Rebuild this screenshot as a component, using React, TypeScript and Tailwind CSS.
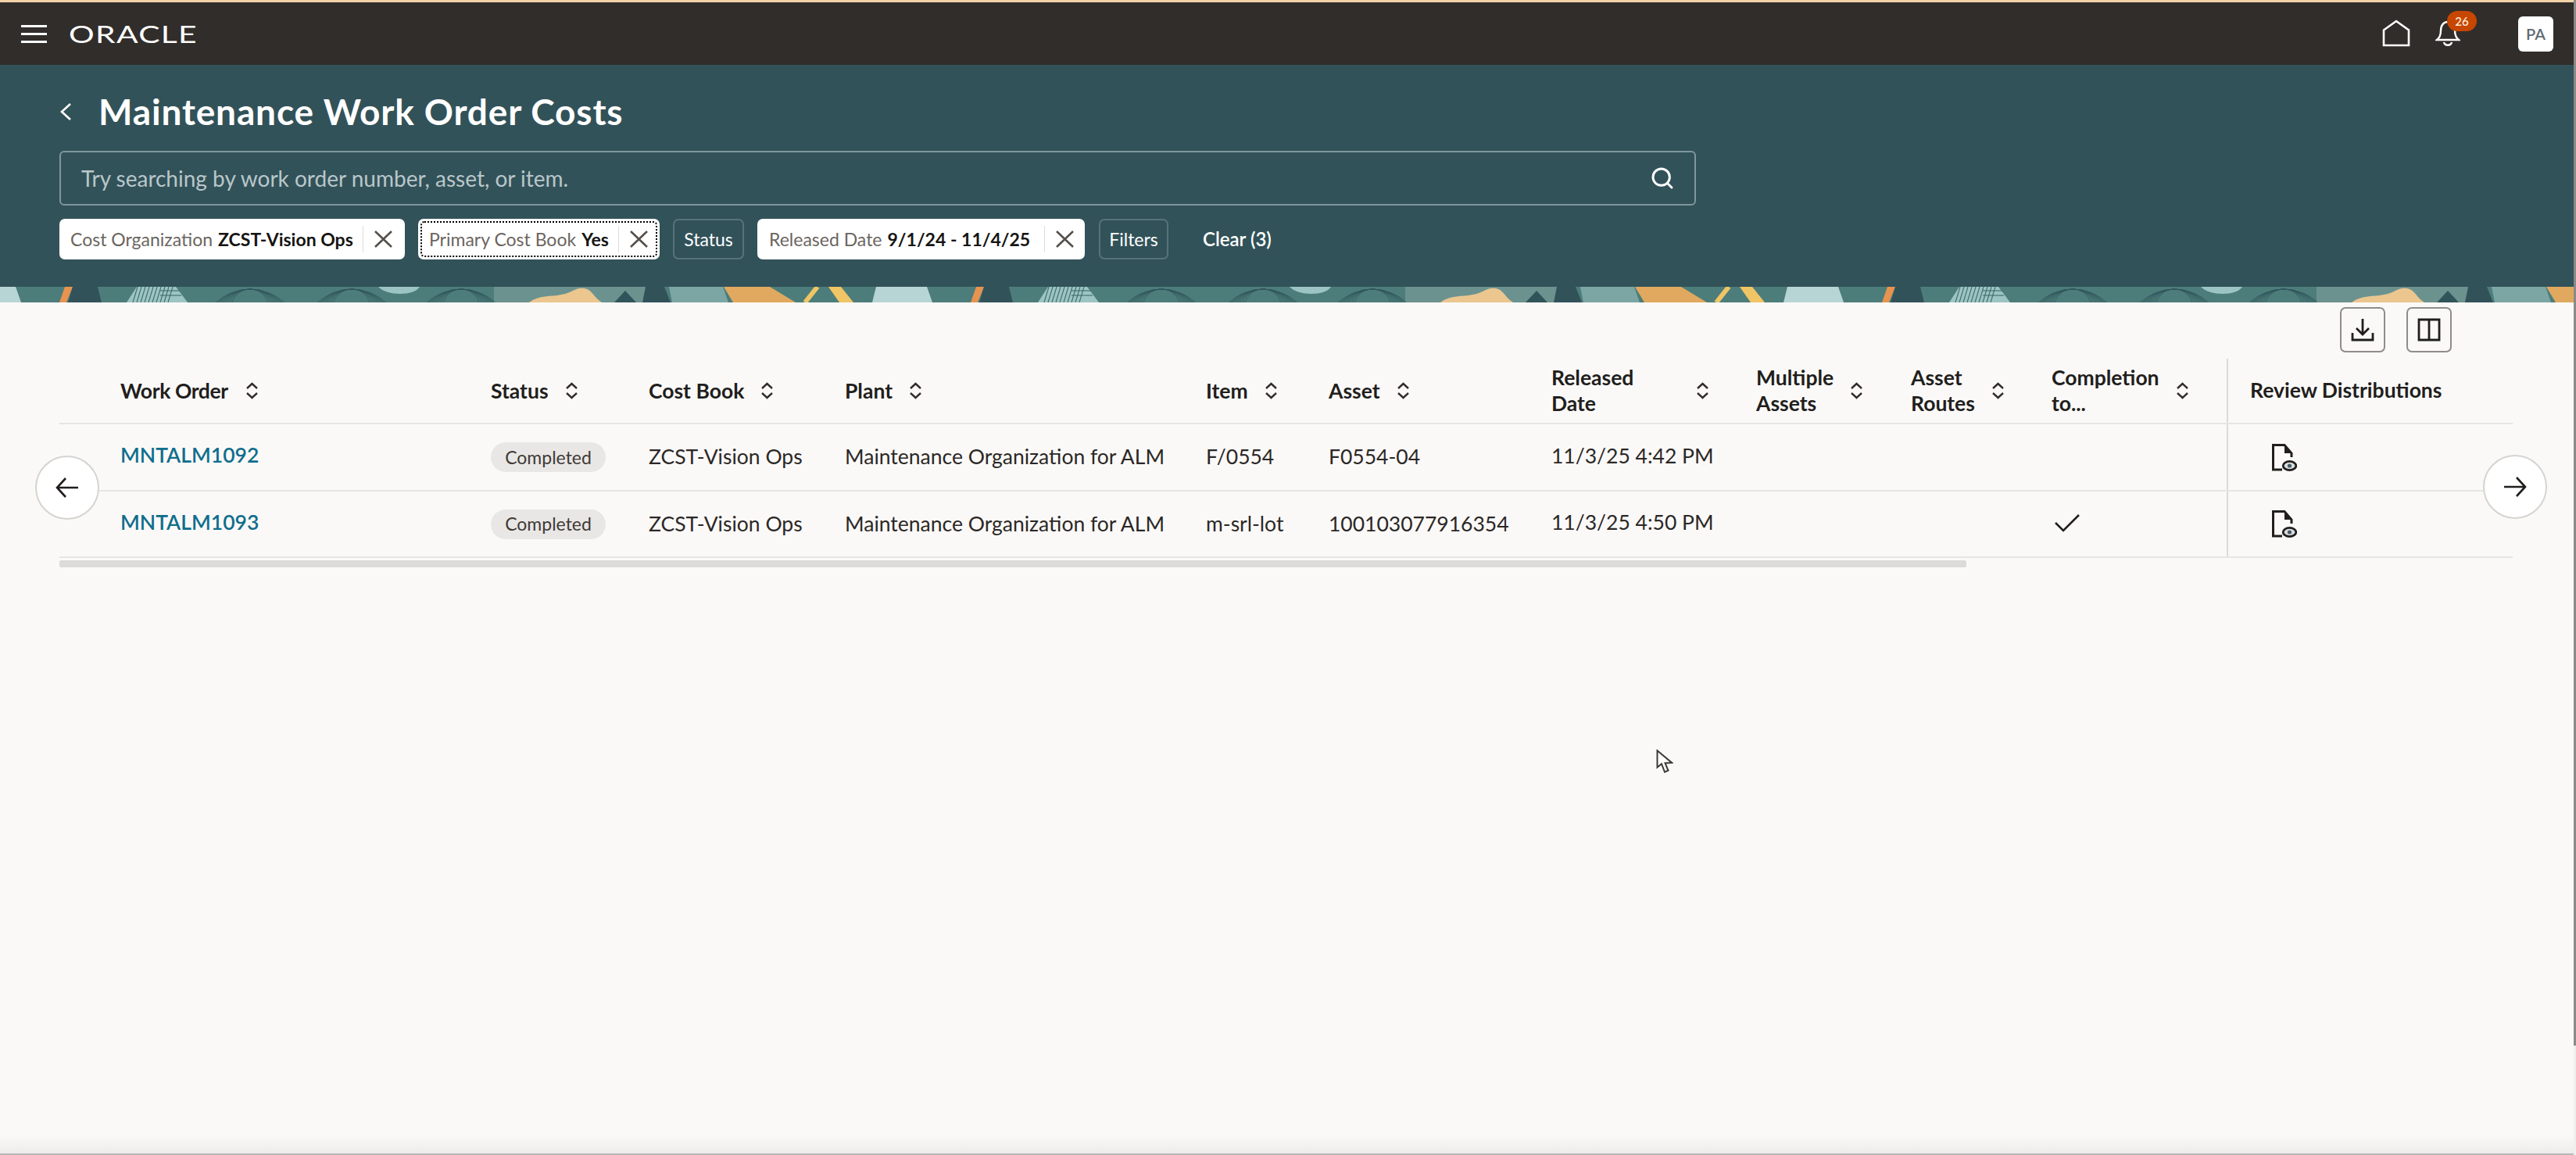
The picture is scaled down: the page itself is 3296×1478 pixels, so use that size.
import { Search } from "lucide-react"
import type { ReactNode } from "react"

const rowGrid =
  "grid grid-cols-[50px_474px_202px_251px_462px_157px_285px_262px_198px_180px_252px_366px]"

function BannerPattern() {
  const light = "#9cc4c4"
  const arcs = [320, 450, 590]
  return (
    <svg className="block h-[20px] w-full" aria-hidden="true">
      <defs>
        <pattern id="banner" patternUnits="userSpaceOnUse" width="1166" height="20">
          <rect width="1166" height="20" fill="#4d7d7b" />
          <rect x="632" width="198" height="20" fill="#6b928f" />
          <polygon points="-45,0 20,0 27,20 -50,20" fill="#b8d5d6" />
          <polygon points="1121,0 1186,0 1193,20 1116,20" fill="#b8d5d6" />
          <polygon points="83,0 93,0 85,20 76,20" fill="#e8934f" />
          <polygon points="93,0 125,0 130,20 87,20" fill="#325259" />
          <polygon points="175,0 225,0 240,20 162,20" fill={light} />
          <g stroke="#3f6a6a" strokeWidth="1.1">
            {[176, 181, 186, 191, 196, 201, 206, 211, 216, 221].map((x) => (
              <line key={x} x1={x} y1="0" x2={x - 6} y2="20" />
            ))}
            <line x1="205" y1="5" x2="230" y2="5" />
            <line x1="205" y1="11" x2="232" y2="11" />
          </g>
          <path d="M484 0 H537 C530 12 495 12 484 0 Z" fill={light} />
          <g fill="none" stroke="#2f555a" strokeOpacity="0.75" strokeWidth="1">
            {arcs.map((cx) =>
              [24, 29, 34, 39, 44, 49, 54, 59, 64].map((r) => (
                <circle key={`${cx}-${r}`} cx={cx} cy={r + 3} r={r} />
              ))
            )}
          </g>
          <path d="M677 20 C690 10 705 13 718 10 C732 8 736 0 748 2 C758 4 760 14 770 20 Z" fill="#ebc68f" />
          <polygon points="786,20 800,5 814,20" fill="#2f555a" />
          <polygon points="826,0 850,0 858,20 822,20" fill="#325259" />
          <polygon points="856,0 925,0 932,20 860,20" fill="#7ba6a4" />
          <polygon points="926,0 985,0 1018,20 938,20" fill="#e0a95f" />
          <line x1="1046" y1="0" x2="1030" y2="20" stroke="#f0c565" strokeWidth="6" />
          <polygon points="1060,0 1076,0 1092,20 1074,20" fill="#f0c565" />
        </pattern>
      </defs>
      <rect width="100%" height="20" fill="url(#banner)" />
    </svg>
  )
}

function CloseIcon() {
  return (
    <svg width="23" height="22" viewBox="0 0 23 22" fill="none" stroke="#55504c" strokeWidth="2.6" aria-hidden="true">
      <path d="M1 1 L22 21 M22 1 L1 21" />
    </svg>
  )
}

function SortIcon() {
  return (
    <svg className="shrink-0" width="17" height="22" viewBox="0 0 17 22" fill="none" stroke="#312d2a" strokeWidth="2.4" aria-hidden="true">
      <path d="M2 8 L8.5 2 L15 8 M2 14 L8.5 20 L15 14" />
    </svg>
  )
}

function DocIcon() {
  return (
    <svg width="32" height="35" viewBox="0 0 32 35" fill="none" aria-hidden="true">
      <path d="M13 33 H1.5 V1.5 H16 L25 12 V17" stroke="#211e1c" strokeWidth="3" />
      <path d="M16 2 L25 12 H16 Z" fill="#211e1c" />
      <ellipse cx="22.5" cy="28" rx="8.3" ry="5.6" stroke="#211e1c" strokeWidth="2.8" fill="#d8dde0" />
      <circle cx="22.5" cy="28" r="2.6" fill="#4b5c68" />
    </svg>
  )
}

function FilterChip({ label, value, focused, width, pad }: { label: string; value: string; focused?: boolean; width: string; pad: string }) {
  return (
    <div className={`relative flex h-[52px] items-center rounded-[7px] bg-white ${width} ${pad}`}>
      {focused && <div className="pointer-events-none absolute inset-[3px] rounded-[5px] border-2 border-dotted border-black" />}
      <span className="whitespace-nowrap text-[23px] text-[#6b6560]">{label}</span>
      <span className="ml-[7px] whitespace-nowrap text-[23px] font-bold text-[#161513]">{value}</span>
      <span className="ml-auto h-[34px] w-px bg-[#dedcda]" />
      <span className="ml-[14px]">
        <CloseIcon />
      </span>
    </div>
  )
}

function FilterButton({ children, width }: { children: ReactNode; width: string }) {
  return (
    <div className={`flex h-[52px] items-center justify-center rounded-[7px] border-2 border-[#567379] text-[23px] text-white ${width}`}>
      {children}
    </div>
  )
}

function HeaderLabel({ children, labelClass }: { children: ReactNode; labelClass?: string }) {
  return (
    <div className="flex items-center gap-[21px] pl-[28px] text-[26.5px] font-bold leading-[33px] text-[#211e1c]">
      <span className={`whitespace-nowrap ${labelClass ?? ""}`}>{children}</span>
      <SortIcon />
    </div>
  )
}

function Row({ order, item, asset, released, done, height }: { order: string; item: string; asset: string; released: string; done?: boolean; height: string }) {
  return (
    <div className={`${rowGrid} ${height} items-center border-b-2 border-[#e7e5e3] text-[26.5px] text-[#2b2826]`}>
      <div />
      <a className="-mt-[4px] whitespace-nowrap pl-[28px] font-semibold text-[#0f6e8c]">{order}</a>
      <div className="pl-[28px]">
        <span className="flex h-[38px] w-[147px] items-center justify-center rounded-full bg-[#e9e7e5] text-[23px] text-[#3f3a36]">
          Completed
        </span>
      </div>
      <div className="whitespace-nowrap pl-[28px]">ZCST-Vision Ops</div>
      <div className="whitespace-nowrap pl-[28px]">Maintenance Organization for ALM</div>
      <div className="whitespace-nowrap pl-[28px]">{item}</div>
      <div className="whitespace-nowrap pl-[28px]">{asset}</div>
      <div className="-mt-[3px] whitespace-nowrap pl-[28px]">{released}</div>
      <div />
      <div />
      <div className="pl-[31px]">
        {done && (
          <svg className="-mt-[4px]" width="34" height="24" viewBox="0 0 34 24" fill="none" stroke="#211e1c" strokeWidth="2.6" aria-hidden="true">
            <path d="M2 12 L12 22 L32 2" />
          </svg>
        )}
      </div>
      <div className="flex h-full items-center border-l-2 border-[#dcdad8] pl-[56px]">
        <DocIcon />
      </div>
    </div>
  )
}

export default function App() {
  return (
    <div className="relative h-[1478px] w-full overflow-hidden bg-[#fbf9f8] font-['Lato',sans-serif]">
      <header className="flex h-[83px] items-center border-t-[3px] border-[#f4d2a8] bg-[#312d2a] pl-[27px] pr-[29px]">
        <div className="flex w-[33px] flex-col gap-[7px]">
          <span className="h-[3px] bg-white" />
          <span className="h-[3px] bg-white" />
          <span className="h-[3px] bg-white" />
        </div>
        <span className="ml-[28px] origin-left scale-x-[1.36] text-[30px] leading-none tracking-[1px] text-white">ORACLE</span>
        <div className="ml-auto flex items-center">
          <svg width="36" height="36" viewBox="0 0 36 36" fill="none" stroke="#fff" strokeWidth="2.6" aria-hidden="true">
            <path d="M2 13.5 L18 2 L34 13.5 V33 H2 Z" />
          </svg>
          <div className="relative ml-[32px] mr-[74px]">
            <svg className="block" width="32" height="34" viewBox="0 0 32 34" fill="none" stroke="#fff" strokeWidth="2.4" aria-hidden="true">
              <path d="M2 25 C6 22 7 18 7 13 C7 6 11 2 16 2 C21 2 25 6 25 13 C25 18 26 22 30 25 Z" />
              <path d="M11 28 C12 33 20 33 21 28" />
            </svg>
            <span className="absolute -top-[12px] left-[15px] flex h-[26px] w-[38px] items-center justify-center rounded-full bg-[#c74600] text-[15px] font-semibold text-[#ffe9d6]">
              26
            </span>
          </div>
          <div className="flex h-[45px] w-[45px] items-center justify-center rounded-[6px] bg-white text-[20px] font-semibold text-[#5f6b75]">
            PA
          </div>
        </div>
      </header>

      <section className="h-[284px] bg-[#325259] pl-[76px] pt-[36px]">
        <div className="flex h-[48px] items-center">
          <svg width="16" height="24" viewBox="0 0 16 24" fill="none" stroke="#fff" strokeWidth="2.6" aria-hidden="true">
            <path d="M14 2 L3 12 L14 22" />
          </svg>
          <h1 className="ml-[34px] whitespace-nowrap text-[46px] font-bold leading-[48px] tracking-[0.85px] text-white">Maintenance Work Order Costs</h1>
        </div>
        <div className="mt-[26px] flex h-[70px] w-[2094px] items-center justify-between rounded-[6px] border-2 border-[#7f979c] pl-[26px] pr-[25px]">
          <span className="text-[28px] text-[#b9c7ca]">Try searching by work order number, asset, or item.</span>
          <Search size={32} strokeWidth={2.2} className="text-white" />
        </div>
        <div className="mt-[17px] flex items-center gap-[17px]">
          <FilterChip label="Cost Organization" value="ZCST-Vision Ops" width="w-[442px]" pad="pl-[14px] pr-[16px]" />
          <FilterChip label="Primary Cost Book" value="Yes" focused width="w-[309px]" pad="pl-[14px] pr-[15px]" />
          <FilterButton width="w-[91px]">Status</FilterButton>
          <FilterChip label="Released Date" value="9/1/24 - 11/4/25" width="w-[419px]" pad="pl-[15px] pr-[14px]" />
          <FilterButton width="ml-[1px] w-[89px]">Filters</FilterButton>
          <span className="ml-[27px] whitespace-nowrap text-[24px] font-semibold text-white">Clear (3)</span>
        </div>
      </section>

      <BannerPattern />

      <main>
        <div className="flex justify-end gap-[27px] pr-[159px] pt-[6px]">
          <button className="flex h-[58px] w-[58px] items-center justify-center rounded-[7px] border-2 border-[#8f8c89]">
            <svg width="30" height="30" viewBox="0 0 30 30" fill="none" stroke="#211e1c" strokeWidth="2.8" aria-hidden="true">
              <path d="M15 1 V20 M7 13 L15 21 L23 13 M2 19 V28 H28 V19" />
            </svg>
          </button>
          <button className="flex h-[58px] w-[58px] items-center justify-center rounded-[7px] border-2 border-[#8f8c89]">
            <svg width="30" height="30" viewBox="0 0 30 30" fill="none" stroke="#211e1c" strokeWidth="2.8" aria-hidden="true">
              <path d="M2 2 H28 V28 H2 Z M15 2 V28" />
            </svg>
          </button>
        </div>

        <div className="ml-[76px] mt-[8px] w-[3139px]">
          <div className={`${rowGrid} h-[84px] items-center border-b-2 border-[#e7e5e3]`}>
            <div />
            <HeaderLabel labelClass="w-[139px] tracking-[-0.4px]">Work Order</HeaderLabel>
            <HeaderLabel>Status</HeaderLabel>
            <HeaderLabel>Cost Book</HeaderLabel>
            <HeaderLabel>Plant</HeaderLabel>
            <HeaderLabel>Item</HeaderLabel>
            <HeaderLabel>Asset</HeaderLabel>
            <HeaderLabel labelClass="w-[164px]">
              Released
              <br />
              Date
            </HeaderLabel>
            <HeaderLabel>
              Multiple
              <br />
              Assets
            </HeaderLabel>
            <HeaderLabel>
              Asset
              <br />
              Routes
            </HeaderLabel>
            <HeaderLabel>
              Completion
              <br />
              to...
            </HeaderLabel>
            <div className="flex h-full items-center whitespace-nowrap border-l-2 border-[#dcdad8] pl-[28px] text-[26.5px] font-bold text-[#211e1c]">
              Review Distributions
            </div>
          </div>
          <Row order="MNTALM1092" item="F/0554" asset="F0554-04" released="11/3/25 4:42 PM" height="h-[86px]" />
          <Row order="MNTALM1093" item="m-srl-lot" asset="100103077916354" released="11/3/25 4:50 PM" done height="h-[85px]" />
          <div className="mt-[3px] h-[9px] w-[2440px] rounded-[2px] bg-[#dcdbd9]" />
        </div>
      </main>

      <button className="absolute left-[45px] top-[583px] flex h-[82px] w-[82px] items-center justify-center rounded-full border-2 border-[#d6d4d2] bg-white">
        <svg width="30" height="26" viewBox="0 0 30 26" fill="none" stroke="#211e1c" strokeWidth="2.6" aria-hidden="true">
          <path d="M29 13 H2 M13 1 L2 13 L13 25" />
        </svg>
      </button>
      <button className="absolute left-[3177px] top-[582px] flex h-[82px] w-[82px] items-center justify-center rounded-full border-2 border-[#d6d4d2] bg-white">
        <svg width="30" height="26" viewBox="0 0 30 26" fill="none" stroke="#211e1c" strokeWidth="2.6" aria-hidden="true">
          <path d="M1 13 H28 M17 1 L28 13 L17 25" />
        </svg>
      </button>

      <svg className="absolute left-[2119px] top-[959px]" width="22" height="32" viewBox="0 0 22 32" aria-hidden="true">
        <path d="M1.5 1.5 V23 L7 18.5 L11 29 L15.5 27 L11.5 17.5 L20 17 Z" fill="#fff" stroke="#3a3a3a" strokeWidth="2" />
      </svg>

      <div className="absolute bottom-0 left-0 right-0 h-[25px] bg-gradient-to-b from-transparent to-[#ecebe9]" />
      <div className="absolute bottom-0 left-0 right-0 h-[2px] bg-[#b4b9b8]" />
      <div className="absolute right-0 top-0 h-[1338px] w-[3px] bg-[#8a8a88]" />
      <div className="absolute bottom-0 right-0 top-[1338px] w-[3px] bg-[#f0efed]" />
    </div>
  )
}
